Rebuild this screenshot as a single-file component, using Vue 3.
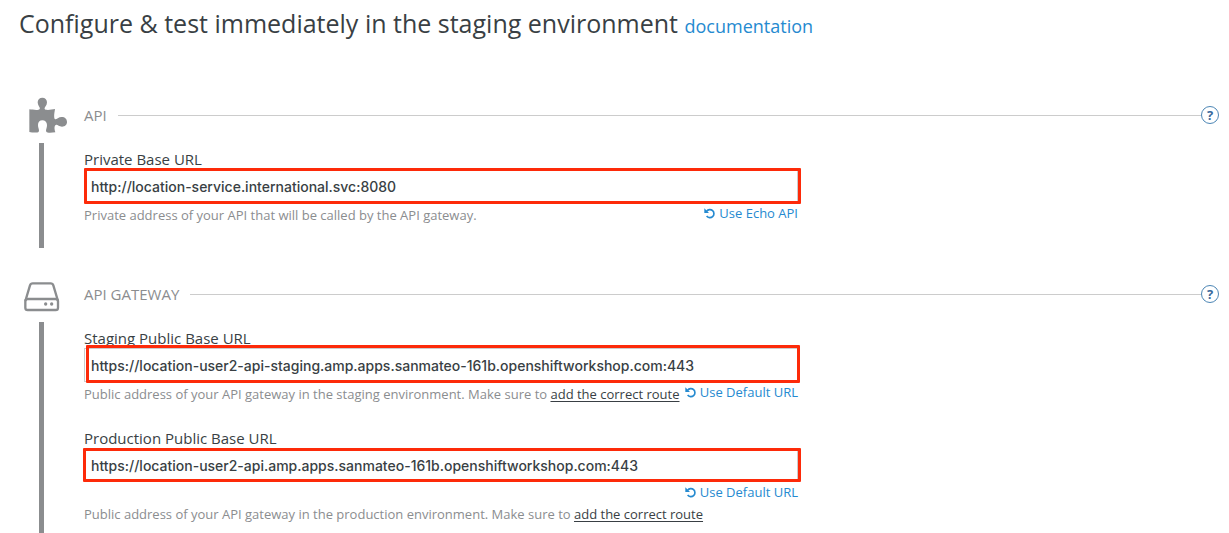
<script setup>
import { ref } from 'vue'

const privateUrl = ref('http://location-service.international.svc:8080')
const stagingUrl = ref('https://location-user2-api-staging.amp.apps.sanmateo-161b.openshiftworkshop.com:443')
const productionUrl = ref('https://location-user2-api.amp.apps.sanmateo-161b.openshiftworkshop.com:443')
</script>

<template>
  <main class="page">
    <h1 class="title">
      Configure &amp; test immediately in the staging environment
      <a class="doc" href="#">documentation</a>
    </h1>

    <section class="section">
      <div class="rail">
        <svg class="rail-icon puzzle" viewBox="57 36 117 108" aria-hidden="true">
          <path d="M58 73C68 74 86 77 89 72C92 67 83 63 83 52C83 43 89 38 97 38C105 38 111 43 111 52C111 63 102 67 104 72C107 77 125 74 135 72C133 84 131 97 134 102C138 106 144 96 155 96C165 96 171 102 171 111C171 119 165 125 156 125C146 125 142 117 137 120C132 124 133 134 136 142C126 143 112 145 109 140C106 135 111 130 111 120C111 111 105 106 97 106C89 106 84 111 84 120C84 130 89 134 86 140C83 144 68 143 58 141Z" />
        </svg>
        <div class="bar"></div>
      </div>
      <div class="body">
        <header class="head">
          <h2>API</h2>
          <span class="rule"></span>
          <button class="help" type="button" aria-label="Help for API">?</button>
        </header>
        <div class="field">
          <label for="private">Private Base URL</label>
          <div class="box">
            <input id="private" v-model="privateUrl" type="text" />
            <span class="mark mark-a"></span>
          </div>
          <div class="notes">
            <p>Private address of your API that will be called by the API gateway.</p>
            <a class="reset" href="#">
              <svg viewBox="132 177 33 33" aria-hidden="true"><path class="arc" d="M140 187A12 12 0 1 1 140 201" /><path class="tip" d="M133 178V192H147Z" /></svg>Use Echo API</a>
          </div>
        </div>
      </div>
    </section>

    <section class="section last">
      <div class="rail">
        <svg class="rail-icon drive" viewBox="42 36 108 90" aria-hidden="true">
          <path class="line" d="M46 93L60 46Q62 40 68 40H122Q128 40 130 46L144 93" />
          <rect class="line" x="46" y="87" width="98" height="33" rx="7" />
          <circle cx="107" cy="102" r="5" />
          <circle cx="125" cy="102" r="5" />
        </svg>
        <div class="bar"></div>
      </div>
      <div class="body">
        <header class="head">
          <h2>API GATEWAY</h2>
          <span class="rule"></span>
          <button class="help" type="button" aria-label="Help for API gateway">?</button>
        </header>
        <div class="field">
          <label for="staging">Staging Public Base URL</label>
          <div class="box">
            <input id="staging" v-model="stagingUrl" type="text" />
            <span class="mark mark-b"></span>
          </div>
          <div class="notes">
            <p>Public address of your API gateway in the staging environment. Make sure to <a href="#">add the correct route</a></p>
            <a class="reset" href="#">
              <svg viewBox="132 177 33 33" aria-hidden="true"><path class="arc" d="M140 187A12 12 0 1 1 140 201" /><path class="tip" d="M133 178V192H147Z" /></svg>Use Default URL</a>
          </div>
        </div>
        <div class="field">
          <label for="production">Production Public Base URL</label>
          <div class="box">
            <input id="production" v-model="productionUrl" type="text" />
            <span class="mark mark-c"></span>
          </div>
          <div class="notes stacked">
            <a class="reset" href="#">
              <svg viewBox="132 177 33 33" aria-hidden="true"><path class="arc" d="M140 187A12 12 0 1 1 140 201" /><path class="tip" d="M133 178V192H147Z" /></svg>Use Default URL</a>
            <p>Public address of your API gateway in the production environment. Make sure to <a href="#">add the correct route</a></p>
          </div>
        </div>
      </div>
    </section>
  </main>
</template>

<style>
body {
  background: #fff;
}
</style>

<style scoped>
.page {
  font-family: "Open Sans", "Noto Sans", sans-serif;
  color: #393f44;
  padding: 5px 10px 0 19px;
}
.title {
  margin: 0 0 56px;
  font-size: 25px;
  font-weight: 400;
  line-height: 36px;
}
.doc {
  font-size: 18px;
  color: #258ad0;
  text-decoration: none;
}
.section {
  display: flex;
  gap: 16px;
  min-height: 148px;
  margin-bottom: 31px;
}
.last {
  min-height: 254px;
  margin-bottom: 0;
}
.rail {
  width: 49px;
  flex: none;
  display: flex;
  flex-direction: column;
}
.rail-icon {
  display: block;
  fill: #8b8d8f;
}
.puzzle {
  width: 39px;
  height: 36px;
  margin: -3px 0 10px 10px;
}
.drive {
  width: 36px;
  height: 30px;
  margin: 3px 0 10px 5px;
}
.line {
  fill: none;
  stroke: #8b8d8f;
  stroke-width: 7;
  stroke-linejoin: round;
}
.bar {
  width: 5px;
  flex: 1;
  margin-left: 20px;
  background: #8b8d8f;
}
.body {
  flex: 1;
  min-width: 0;
}
.head {
  display: flex;
  align-items: center;
  height: 30px;
  margin-bottom: 19px;
}
h2 {
  margin: 0 11px 0 0;
  font-size: 15px;
  font-weight: 400;
  line-height: 20px;
  color: #8b8d8f;
}
.rule {
  flex: 1;
  height: 1px;
  background: #ccc;
}
.help {
  width: 18px;
  height: 18px;
  padding: 0;
  border: 1px solid #4c86b5;
  border-radius: 50%;
  background: #fff;
  color: #39699c;
  font: 700 13px/16px "Open Sans", sans-serif;
}
.field {
  max-width: 714px;
  margin-bottom: 24px;
}
.section:not(.last) .field {
  margin-bottom: 0;
}
label {
  display: block;
  font-size: 15px;
  line-height: 20px;
}
.box {
  position: relative;
}
input {
  display: block;
  box-sizing: border-box;
  width: 100%;
  height: 34px;
  padding: 0 6px;
  border: 1px solid #ccc;
  background: #fff;
  color: #393f44;
  font: 500 14px Inter, sans-serif;
}
.mark {
  position: absolute;
  border: 3px solid #fd2a09;
  border-radius: 1px;
  pointer-events: none;
}
.mark-a {
  inset: -1px -3px -1px 0;
}
.mark-b {
  inset: -3px -2px -1px 2px;
}
.mark-c {
  inset: 0 -3px 0 -1px;
}
.notes {
  display: flex;
  justify-content: space-between;
  font-size: 13px;
  line-height: 20px;
  white-space: nowrap;
}
.notes p {
  margin: 2px 0 0;
  color: #8b8d8f;
}
.notes p a {
  color: #393f44;
  text-underline-offset: 2px;
}
.stacked {
  flex-direction: column;
}
.reset {
  display: flex;
  align-items: center;
  align-self: flex-start;
  gap: 4px;
  color: #258ad0;
  text-decoration: none;
}
.stacked .reset {
  align-self: flex-end;
}
.reset svg {
  width: 11px;
  height: 11px;
}
.arc {
  fill: none;
  stroke: #258ad0;
  stroke-width: 5;
}
.tip {
  fill: #258ad0;
}
</style>
